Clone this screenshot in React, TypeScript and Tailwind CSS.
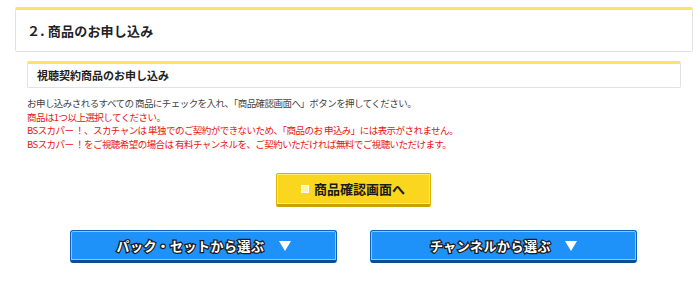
import React from "react";

const jp = { fontFamily: '"Noto Sans CJK JP", "Noto Sans", sans-serif' };

function BlueButton({ label }: { label: string }) {
  return (
    <button
      className="flex h-[33px] w-[267px] items-center justify-center gap-[14px] rounded-[3px] border border-[#0b62b8] border-b-[3px] border-b-[#0a4f94] bg-[#1e92f8] shadow-[inset_0_0_0_1px_#86caff]"
    >
      <span
        className="text-[13px] font-bold text-white [-webkit-text-stroke:2.5px_#1a1a1a] [paint-order:stroke_fill] tracking-[0.5px]"
      >
        {label}
      </span>
      <span className="mt-[1px] h-0 w-0 border-x-[6px] border-t-[10px] border-x-transparent border-t-white" />
    </button>
  );
}

export default function App() {
  return (
    <div className="w-[700px] h-[286px] bg-white pt-[7px]" style={jp}>
      <div className="ml-[15px] mr-[7px] h-[45px] rounded-[2px] border border-[#e2e2e2] border-t-[3px] border-t-[#f7e46a] flex items-center pl-[11px]">
        <h2 className="text-[13px] font-bold text-[#222] tracking-[0.2px]">２. 商品のお申し込み</h2>
      </div>
      <div className="ml-[27px] mr-[19px] mt-[9px] h-[27px] rounded-[2px] border border-[#e2e2e2] border-t-[3px] border-t-[#f7e46a] flex items-center pl-[9px]">
        <h3 className="text-[11px] font-bold text-[#222]">視聴契約商品のお申し込み</h3>
      </div>
      <div className="ml-[27px] mt-[9px] text-[9.5px] leading-[13.5px] tracking-[-0.55px]">
        <p className="text-[#444]">お申し込みされるすべての 商品にチェックを入れ、「商品確認画面へ」ボタンを押してください。</p>
        <p className="text-[#e8140f]">商品は1つ以上選択してください。</p>
        <p className="text-[#e8140f]">BSスカパー ！、スカチャンは 単独でのご契約ができないため、「商品のお 申込み」には表示がされません。</p>
        <p className="text-[#e8140f]">BSスカパー ！をご視聴希望の場合は 有料チャンネルを、ご契約いただければ無料でご視聴いただけます。</p>
      </div>
      <div className="mt-[22px] flex justify-center pl-[6px]">
        <button className="flex h-[34px] w-[155px] items-center justify-center gap-[5px] rounded-[2px] border border-[#d9b400] border-b-[3px] border-b-[#c9a400] bg-[#fbd61e] shadow-[inset_0_0_0_1px_#fde97a]">
          <span className="h-[8px] w-[8px] bg-[#fff3b0] border border-white" />
          <span className="text-[13px] font-bold text-[#1a1a1a]">商品確認画面へ</span>
        </button>
      </div>
      <div className="mt-[23px] flex gap-[33px] pl-[70px]">
        <BlueButton label="パック・セットから選ぶ" />
        <BlueButton label="チャンネルから選ぶ" />
      </div>
    </div>
  );
}
